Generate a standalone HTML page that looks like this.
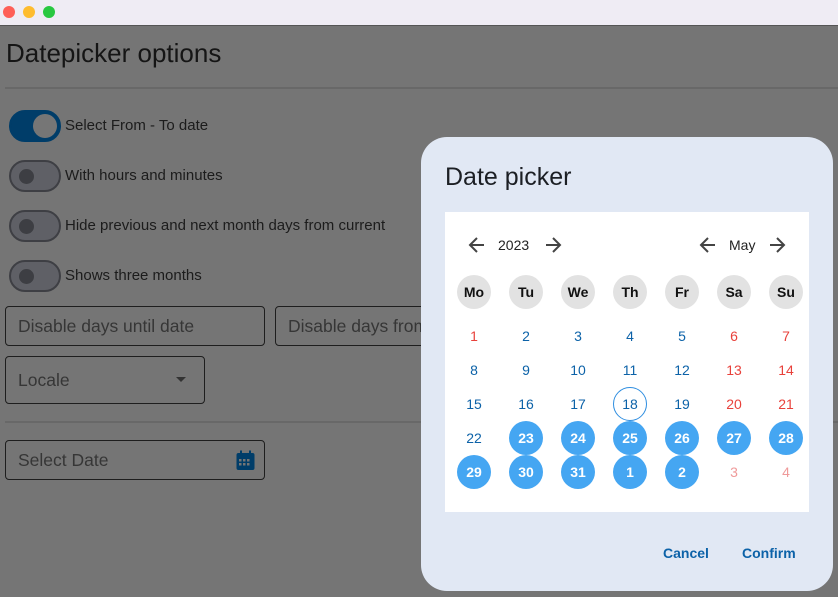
<!DOCTYPE html>
<html><head><style>
*{margin:0;padding:0;box-sizing:border-box}
body{width:838px;height:597px;overflow:hidden;background:#757575;font-family:"Liberation Sans",sans-serif;position:relative}
.tb{position:absolute;left:0;top:0;width:838px;height:26px;background:#efecf4;border-bottom:1px solid #555}
.dot{position:absolute;top:6px;width:12px;height:12px;border-radius:50%}
.abs{position:absolute}
.h1{left:6px;top:38px;font-size:26px;color:#151515}
.hr{position:absolute;left:5px;right:0;height:2px;background:#686868}
.tg{position:absolute;left:9px;width:52px;height:32px;border-radius:16px;background:#5f6066;border:2px solid #3e3f44}
.tg i{position:absolute;left:8px;top:7px;width:15px;height:15px;border-radius:50%;background:#3d3e43}
.tg.on{background:#003d69;border-color:#003d69}
.tg.on i{left:22px;top:2px;width:24px;height:24px;background:#767676}
.lb{position:absolute;left:65px;font-size:15px;color:#1c1c1c}
.fd{position:absolute;border:1.5px solid #1e1e1e;border-radius:4px;font-size:17.5px;color:#363636;padding-left:12px;display:flex;align-items:center;white-space:nowrap;overflow:hidden}
.dlg{position:absolute;left:421px;top:137px;width:412px;height:454px;background:#e1e8f4;border-radius:26px}
.cal{position:absolute;left:24px;top:75px;width:364px;height:300px;background:#fff}
.c{position:absolute;width:34px;height:34px;margin-left:-17px;margin-top:-17px;border-radius:50%;display:flex;align-items:center;justify-content:center;font-size:14px;font-weight:bold}
.wd{background:#e2e2e2;color:#111;font-size:14px}
.b{color:#0c62a8;font-weight:normal}
.r{color:#e8413b;font-weight:normal}
.p{color:#ef9a9a;font-weight:normal}
.s{background:#45a6f2;color:#fff}
.t{border:1.5px solid #2f8ee0;color:#0c62a8;font-weight:normal}
.btn{position:absolute;top:408px;font-size:14px;color:#0c62a8;font-weight:bold}
</style></head><body>
<div class="tb"><div class="dot" style="left:3px;background:#fe5f57"></div><div class="dot" style="left:23px;background:#febc2e"></div><div class="dot" style="left:43px;background:#28c840"></div></div>
<div class="abs h1">Datepicker options</div>
<div class="hr" style="top:87px"></div>
<div class="tg on" style="top:110px"><i></i></div><div class="lb" style="top:117px">Select From - To date</div>
<div class="tg" style="top:160px"><i></i></div><div class="lb" style="top:167px">With hours and minutes</div>
<div class="tg" style="top:210px"><i></i></div><div class="lb" style="top:217px">Hide previous and next month days from current</div>
<div class="tg" style="top:260px"><i></i></div><div class="lb" style="top:267px">Shows three months</div>
<div class="fd" style="left:5px;top:306px;width:260px;height:40px">Disable days until date</div>
<div class="fd" style="left:275px;top:306px;width:260px;height:40px">Disable days from date</div>
<div class="fd" style="left:5px;top:356px;width:200px;height:48px">Locale<span style="position:absolute;left:170px;top:20px;border:5px solid transparent;border-top:5px solid #333;border-bottom:0"></span></div>
<div class="hr" style="top:421px"></div>
<div class="fd" style="left:5px;top:440px;width:260px;height:40px">Select Date
<svg style="position:absolute;left:230px;top:9px" width="19" height="21" viewBox="0 0 19 21"><rect x="0.5" y="3" width="18" height="17" rx="2" fill="#003d69"/><rect x="4" y="0.5" width="2" height="4" fill="#003d69"/><rect x="13" y="0.5" width="2" height="4" fill="#003d69"/><g fill="#757575"><rect x="3" y="9" width="2.5" height="2.5"/><rect x="7" y="9" width="2.5" height="2.5"/><rect x="11" y="9" width="2.5" height="2.5"/><rect x="3" y="13" width="2.5" height="2.5"/><rect x="7" y="13" width="2.5" height="2.5"/><rect x="11" y="13" width="2.5" height="2.5"/></g></svg></div>
<div class="dlg">
<div class="abs" style="left:24px;top:26px;font-size:25px;color:#1c1f24">Date picker</div>
<div class="cal"></div>
<svg class="abs" style="left:47px;top:99px" width="18" height="18" viewBox="0 0 18 18"><path d="M16 9H3M9 2L2 9l7 7" stroke="#444" stroke-width="2" fill="none"/></svg>
<div class="abs" style="left:77px;top:100px;font-size:14px;color:#222">2023</div>
<svg class="abs" style="left:123px;top:99px" width="18" height="18" viewBox="0 0 18 18"><path d="M2 9h13M9 2l7 7-7 7" stroke="#444" stroke-width="2" fill="none"/></svg>
<svg class="abs" style="left:278px;top:99px" width="18" height="18" viewBox="0 0 18 18"><path d="M16 9H3M9 2L2 9l7 7" stroke="#444" stroke-width="2" fill="none"/></svg>
<div class="abs" style="left:308px;top:100px;font-size:14px;color:#222">May</div>
<svg class="abs" style="left:347px;top:99px" width="18" height="18" viewBox="0 0 18 18"><path d="M2 9h13M9 2l7 7-7 7" stroke="#444" stroke-width="2" fill="none"/></svg>
<div class="btn" style="left:242px">Cancel</div>
<div class="btn" style="left:321px">Confirm</div>
</div>
<div id="g"></div>
<script>
var xs=[474,526,578,630,682,734,786],h='';
var wd=['Mo','Tu','We','Th','Fr','Sa','Su'];
wd.forEach(function(w,i){h+='<div class="c wd" style="left:'+xs[i]+'px;top:292px">'+w+'</div>'});
var rows=[[1,2,3,4,5,6,7],[8,9,10,11,12,13,14],[15,16,17,18,19,20,21],[22,23,24,25,26,27,28],[29,30,31,1,2,3,4]];
var ys=[336,370,404,438,472];
rows.forEach(function(r,ri){r.forEach(function(d,i){var c;
if(ri==4&&i>4)c='p';else if((ri==3&&i>0)||ri==4)c='s';else if(ri==2&&i==3)c='t';else if(i>4||(ri==0&&i==0))c='r';else c='b';
h+='<div class="c '+c+'" style="left:'+xs[i]+'px;top:'+ys[ri]+'px">'+d+'</div>'})});
document.getElementById('g').innerHTML=h;
</script>
</body></html>
